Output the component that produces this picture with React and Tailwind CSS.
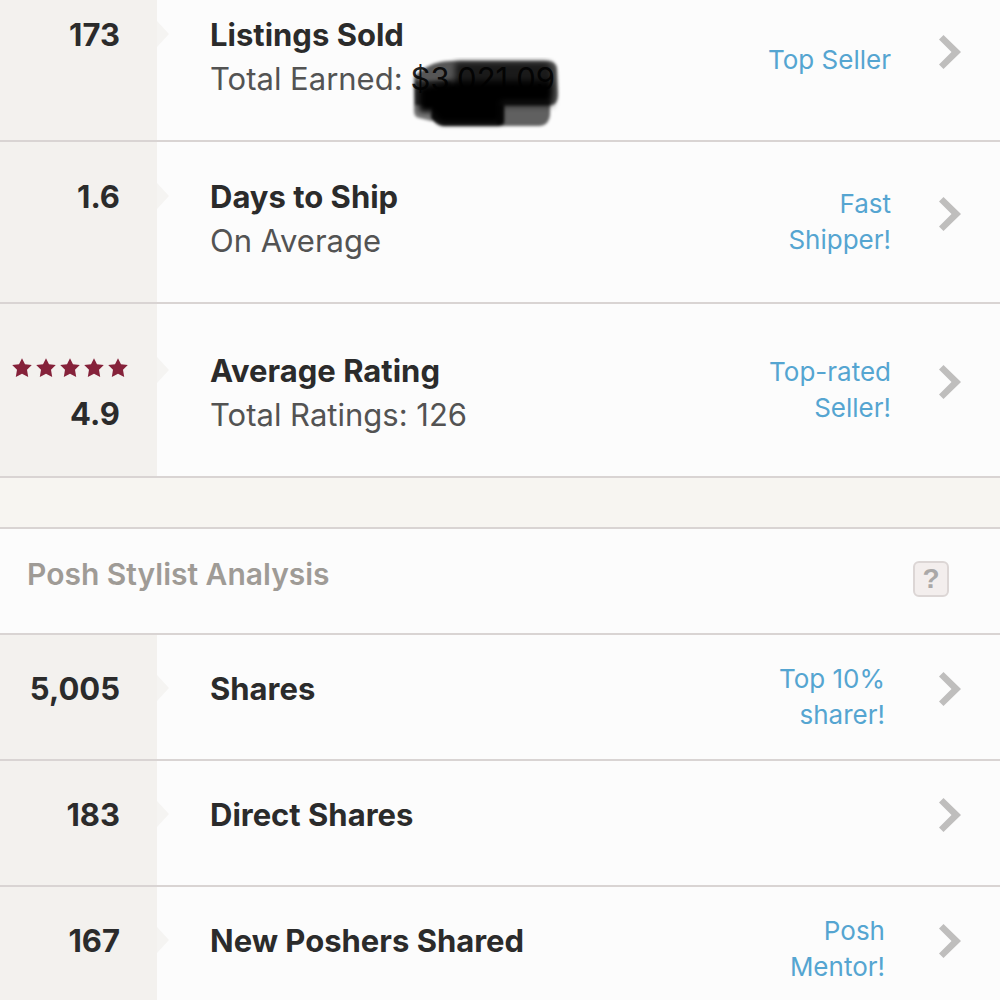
const closetStats = [
  {
    id: "sold",
    value: "173",
    title: "Listings Sold",
    detail: "Total Earned:",
    hiddenAmount: "$3,021.09",
    badge: "Top Seller",
  },
  {
    id: "ship",
    value: "1.6",
    title: "Days to Ship",
    detail: "On Average",
    badge: "Fast Shipper!",
  },
  {
    id: "rating",
    value: "4.9",
    stars: 5,
    title: "Average Rating",
    detail: "Total Ratings: 126",
    badge: "Top-rated Seller!",
  },
];

const stylistStats = [
  { id: "shares", value: "5,005", title: "Shares", badge: "Top 10% sharer!" },
  { id: "direct", value: "183", title: "Direct Shares" },
  {
    id: "poshers",
    value: "167",
    title: "New Poshers Shared",
    badge: "Posh Mentor!",
  },
];

function Star() {
  return (
    <svg viewBox="0 0 20 20" className="h-5 w-5 fill-[#85223a]">
      <path d="M10 0.3 13 6.3 19.8 7.1 15 11.8 16.2 18.9 10 15.8 3.8 18.9 5 11.8 0.2 7.1 7 6.3Z" />
    </svg>
  );
}

function Chevron() {
  return (
    <svg
      viewBox="0 0 22 34"
      className="mb-4 h-[34px] w-[22px] shrink-0"
      aria-hidden="true"
    >
      <path d="M0 4.5 4.5 0 22 17 4.5 34 0 29.5 12.5 17Z" fill="#bfbebd" />
    </svg>
  );
}

// Marker strokes that cover the amount
function Scribble() {
  return (
    <svg
      viewBox="0 0 156 76"
      className="absolute -left-1 top-0 h-[76px] w-[156px]"
      aria-hidden="true"
    >
      <defs>
        <filter id="soft" x="-10%" y="-10%" width="120%" height="120%">
          <feGaussianBlur stdDeviation="1.4" />
        </filter>
        <filter id="softer" x="-20%" y="-40%" width="140%" height="180%">
          <feGaussianBlur stdDeviation="3" />
        </filter>
      </defs>
      <g filter="url(#soft)">
        <path d="M7 20 Q22 4 44 4H141Q149 4 150 12L151 38Q151 48 143 48H8Z" fillOpacity="0.66" />
        <path d="M7 24 44 24V60L24 64 12 61Q7 60 7 54Z" fillOpacity="0.5" />
        <path d="M90 44H143V58Q142 68 133 69H90Z" fillOpacity="0.62" />
        <path d="M26 48H97V66Q95 69 90 69H36Q28 68 24 60Z" fillOpacity="0.9" />
      </g>
      <g filter="url(#softer)">
        <path d="M48 5H140Q146 8 146 18V49H48Z" fillOpacity="0.7" />
        <path d="M12 30 44 24H145Q149 38 142 45H94V66H34L26 55H12Z" />
      </g>
    </svg>
  );
}

function StatRow({ stat, rowClass, padClass, badgeClass }) {
  return (
    <li className="border-b-2 border-[#d9d4d3]">
      <a href={`#${stat.id}`} className={`flex ${rowClass}`}>
        <div
          className={`relative w-[157px] shrink-0 bg-[#f3f1ee] text-right font-bold leading-[44px] ${padClass}`}
        >
          {stat.stars && (
            <div className="flex h-[43px] items-center justify-end gap-1 pb-1.5 pr-[29px]">
              {Array.from({ length: stat.stars }, (_, i) => (
                <Star key={i} />
              ))}
            </div>
          )}
          <div className="pr-[37px]">{stat.value}</div>
          {/* Pointer towards the title */}
          <div className={`absolute left-full top-0 ${padClass}`}>
            <svg viewBox="0 0 13 44" className="h-11 w-[13px] fill-[#f5f4f2]">
              <path d="M0 8 12 21 0 34Z" />
            </svg>
          </div>
        </div>
        <div
          className={`min-w-0 flex-1 whitespace-nowrap pl-[53px] leading-[44px] ${padClass}`}
        >
          <h3 className="font-bold">{stat.title}</h3>
          {stat.detail && (
            <p className="text-[#535353]">
              {stat.detail}
              {stat.hiddenAmount && (
                <span className="relative ml-2 inline-block text-[#222]">
                  {stat.hiddenAmount}
                  <Scribble />
                </span>
              )}
            </p>
          )}
        </div>
        <div className={`flex shrink-0 items-center pr-[39px] ${badgeClass}`}>
          {stat.badge && (
            <span className="w-[136px] text-right text-[26px] leading-9 text-[#55a5d1]">
              {stat.badge}
            </span>
          )}
          <Chevron />
        </div>
      </a>
    </li>
  );
}

export default function App() {
  return (
    <main className="min-h-screen overflow-hidden bg-[#fcfcfc] font-['Inter',sans-serif] text-[31px] text-[#2b2b2b]">
      <ul className="-mt-5">
        {closetStats.map((stat) => (
          <StatRow
            key={stat.id}
            stat={stat}
            rowClass={stat.stars ? "min-h-[172px]" : "min-h-[160px]"}
            padClass={stat.stars ? "pt-[45px]" : "pt-[33px]"}
            badgeClass="gap-12"
          />
        ))}
      </ul>

      <div className="h-[49px] bg-[#f7f5f1]" />

      <section>
        <header className="flex h-[108px] items-center justify-between border-y-2 border-[#d9d4d3] pl-[27px] pr-[51px]">
          <h2 className="mb-3.5 text-[30px] font-semibold text-[#9f9b96]">
            Posh Stylist Analysis
          </h2>
          <button
            type="button"
            aria-label="Help"
            className="mb-1 flex h-9 w-9 items-center justify-center rounded-md border-2 border-[#dcd6d5] bg-[#f3eeed] font-['Liberation_Sans',sans-serif] text-[28px] font-bold leading-none text-[#aaa8a7]"
          >
            ?
          </button>
        </header>
        <ul>
          {stylistStats.map((stat) => (
            <StatRow
              key={stat.id}
              stat={stat}
              rowClass="min-h-[124px]"
              padClass="pt-8"
              badgeClass="gap-[54px]"
            />
          ))}
        </ul>
      </section>
    </main>
  );
}
